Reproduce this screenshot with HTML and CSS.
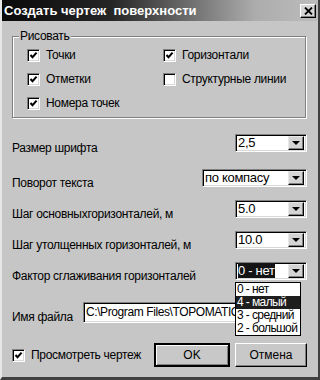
FILE: index.html
```html
<!DOCTYPE html>
<html lang="ru">
<head>
  <meta charset="UTF-8" />
  <title>Создать чертеж поверхности</title>
  <link rel="stylesheet" href="styles.css">
</head>
<body>
  <div class="window">
    <div class="titlebar">
      <span class="title">Создать чертеж&nbsp; поверхности</span>
      <span class="close">
        <svg width="9" height="8" viewBox="0 0 9 8"><path d="M1 0.5 L8 7.5 M8 0.5 L1 7.5" stroke="#000" stroke-width="1.8" fill="none"/></svg>
      </span>
    </div>

    <div class="content">
      <div class="group">
        <span class="legend">Рисовать</span>
        <div class="checks">
          <label class="check"><span class="box on"></span>Точки</label>
          <label class="check"><span class="box on"></span>Горизонтали</label>
          <label class="check"><span class="box on"></span>Отметки</label>
          <label class="check"><span class="box"></span>Структурные линии</label>
          <label class="check"><span class="box on"></span>Номера точек</label>
        </div>
      </div>

      <div class="row first">
        <span class="label">Размер шрифта</span>
        <div class="combo"><span class="value">2,5</span><span class="drop"></span></div>
      </div>
      <div class="row second">
        <span class="label">Поворот текста</span>
        <div class="combo wide"><span class="value">по компасу</span><span class="drop"></span></div>
      </div>
      <div class="row">
        <span class="label">Шаг основныхгоризонталей, м</span>
        <div class="combo"><span class="value">5.0</span><span class="drop"></span></div>
      </div>
      <div class="row">
        <span class="label">Шаг утолщенных горизонталей, м</span>
        <div class="combo"><span class="value">10.0</span><span class="drop"></span></div>
      </div>
      <div class="row">
        <span class="label">Фактор сглаживания горизонталей</span>
        <div class="combo open">
          <span class="value"><span class="selected">0 - нет</span></span><span class="drop"></span>
          <ul class="list">
            <li>0 - нет</li>
            <li class="hover">4 - малый</li>
            <li>3 - средний</li>
            <li>2 - большой</li>
          </ul>
        </div>
      </div>

      <div class="row file">
        <span class="label">Имя файла</span>
        <div class="edit">C:\Program Files\TOPOMATIC\</div>
      </div>

      <div class="bottom">
        <label class="check"><span class="box on"></span>Просмотреть чертеж</label>
        <div class="buttons">
          <button class="btn default">OK</button>
          <button class="btn cancel">Отмена</button>
        </div>
      </div>
    </div>
  </div>
</body>
</html>
```

FILE: styles.css
```css
body {
  margin: 0;
  background: #c6c6c6;
  font-family: "Liberation Sans", Arial, sans-serif;
  font-size: 12px;
  color: #000;
}
.window {
  width: 320px;
  height: 380px;
  box-sizing: border-box;
  background: #c6c6c6;
  border-left: 2px solid #e6e6e6;
  border-right: 2px solid #404040;
  border-bottom: 3px solid #404040;
}
.titlebar {
  display: flex;
  align-items: center;
  height: 21px;
  background: linear-gradient(to right, #0a0a0a 0%, #262626 35%, #707070 60%, #acacac 80%, #bcbcbc 100%);
}
.title {
  color: #fff;
  font-weight: bold;
  font-size: 13px;
  padding-left: 2px;
  white-space: nowrap;
}
.close {
  margin-left: auto;
  margin-right: 2px;
  width: 16px;
  height: 14px;
  box-sizing: border-box;
  display: flex;
  align-items: center;
  justify-content: center;
  background: #d6d6d6;
  border: 1px solid;
  border-color: #fff #000 #000 #fff;
  box-shadow: inset -1px -1px 0 #808080;
}
.content {
  padding: 0 11px 0 10px;
  letter-spacing: -0.3px;
}
.group {
  position: relative;
  margin-top: 15px;
  margin-right: 1px;
  height: 82px;
  box-sizing: border-box;
  border: 1px solid #808080;
  box-shadow: 1px 1px 0 #fff, inset 1px 1px 0 #fff;
  padding: 12px 0 0 14px;
}
.legend {
  position: absolute;
  top: -8px;
  left: 6px;
  padding: 0 1px;
  background: #c6c6c6;
  line-height: 14px;
}
.checks {
  display: grid;
  grid-template-columns: 136px 1fr;
  grid-auto-rows: 13px;
  row-gap: 11px;
}
.check {
  display: flex;
  align-items: center;
  gap: 6px;
  line-height: 13px;
  white-space: nowrap;
}
.box {
  width: 13px;
  height: 13px;
  flex: none;
  box-sizing: border-box;
  background: #fff;
  border: 1px solid;
  border-color: #808080 #fff #fff #808080;
  box-shadow: inset 1px 1px 0 #000, inset -1px -1px 0 #d8d8d8;
}
.box.on {
  background: #fff url("data:image/svg+xml,%3Csvg xmlns='http://www.w3.org/2000/svg' width='11' height='11'%3E%3Cpath d='M2.5 5 L4.5 7.2 L8.6 2.6' stroke='%23000' stroke-width='2' fill='none'/%3E%3C/svg%3E") no-repeat center;
}
.row {
  display: flex;
  justify-content: space-between;
  align-items: flex-start;
  height: 18px;
  margin-top: 13px;
}
.row.first {
  margin-top: 16px;
}
.row.second {
  margin-top: 17px;
}
.label {
  margin-top: 7px;
  line-height: 14px;
  white-space: nowrap;
}
.combo {
  position: relative;
  width: 72px;
  height: 18px;
  box-sizing: border-box;
  display: flex;
  align-items: center;
  background: #fff;
  border: 1px solid;
  border-color: #808080 #fff #fff #808080;
  box-shadow: inset 1px 1px 0 #000, inset -1px -1px 0 #d8d8d8;
  padding: 1px 2px 1px 2px;
}
.combo.wide {
  width: 105px;
}
.value {
  flex: 1;
  font-size: 13px;
  line-height: 14px;
  white-space: nowrap;
}
.selected {
  background: #141414;
  color: #fff;
}
.drop {
  width: 16px;
  height: 14px;
  box-sizing: border-box;
  background: #d4d4d4;
  border: 1px solid;
  border-color: #e8e8e8 #000 #000 #e8e8e8;
  box-shadow: inset -1px -1px 0 #808080;
  display: flex;
  align-items: center;
  justify-content: center;
}
.drop::after {
  content: "";
  border-left: 4px solid transparent;
  border-right: 4px solid transparent;
  border-top: 4px solid #000;
}
.list {
  position: absolute;
  top: 19px;
  left: -1px;
  width: 64px;
  margin: 0;
  padding: 0;
  list-style: none;
  background: #fff;
  border: 1px solid #000;
  z-index: 2;
}
.list li {
  height: 13px;
  line-height: 13px;
  font-size: 12px;
  letter-spacing: -0.6px;
  padding-left: 1px;
  white-space: nowrap;
}
.list li.hover {
  background: #1e1e1e;
  color: #fff;
}
.row.file {
  height: 21px;
  margin-top: 22px;
}
.row.file .label {
  margin-top: 8px;
}
.edit {
  width: 158px;
  margin-right: auto;
  margin-left: 10px;
  height: 21px;
  box-sizing: border-box;
  background: #fff;
  border: 1px solid;
  border-color: #808080 #fff #fff #808080;
  box-shadow: inset 1px 1px 0 #000, inset -1px -1px 0 #d8d8d8;
  padding: 2px 2px;
  font-size: 12px;
  letter-spacing: -0.4px;
  line-height: 15px;
  white-space: nowrap;
  overflow: hidden;
}
.bottom {
  display: flex;
  align-items: center;
  margin-top: 20px;
}
.buttons {
  margin-left: auto;
  display: flex;
  gap: 5px;
}
.btn {
  height: 24px;
  width: 72px;
  font-family: "Liberation Sans", Arial, sans-serif;
  font-size: 12px;
  background: #c8c8c8;
  border: 1px solid;
  border-color: #fff #000 #000 #fff;
  box-shadow: inset -1px -1px 0 #808080;
  padding: 0;
  color: #000;
}
.btn.default {
  width: 76px;
  border: 2px solid #000;
  box-shadow: inset 1px 1px 0 #fff, inset -1px -1px 0 #808080;
}
```
